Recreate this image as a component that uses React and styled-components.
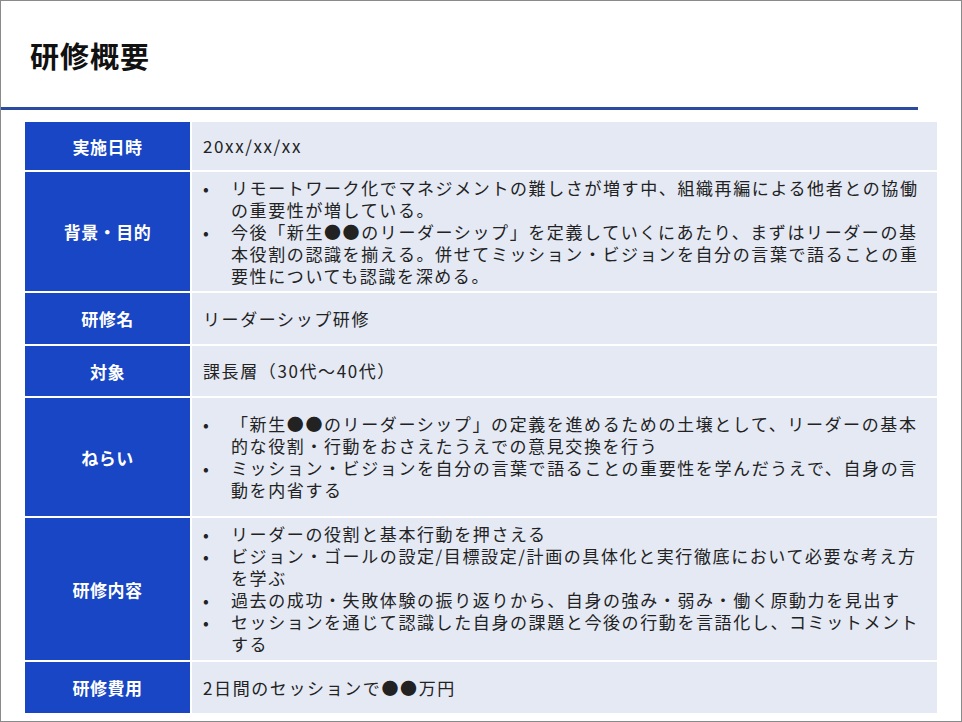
import React from "react";
import styled, { createGlobalStyle } from "styled-components";

const G = createGlobalStyle`
  html,body{margin:0;padding:0;background:#fff;}
  body{font-family:"Noto Sans CJK JP","Noto Sans",sans-serif;}
`;
const Page = styled.div`
  width:962px;height:722px;box-sizing:border-box;border:1px solid #8a8a8a;
  display:flex;flex-direction:column;overflow:hidden;
`;
const Title = styled.h1`
  margin:0;padding:34px 0 0 29px;height:72px;box-sizing:border-box;
  font-size:29px;font-weight:700;color:#111;letter-spacing:1px;line-height:40px;
`;
const Rule = styled.div`width:917px;height:3px;background:#2b4b9e;margin-top:34px;`;
const Table = styled.div`
  margin:12px 0 0 24px;width:912px;display:grid;grid-template-columns:165px 1fr;gap:2px;
`;
const Head = styled.div`
  background:#1846c4;color:#fff;font-weight:700;font-size:17px;
  display:flex;align-items:center;justify-content:center;height:${p=>p.h}px;letter-spacing:0.5px;
`;
const Cell = styled.div`
  background:#e4e9f4;color:#222;font-size:17px;letter-spacing:1.6px;line-height:22px;
  display:flex;flex-direction:column;justify-content:center;padding:0 14px 0 11px;height:${p=>p.h}px;
`;
const List = styled.ul`margin:0;padding:0;list-style:none;`;
const Item = styled.li`
  position:relative;padding-left:28px;
  &::before{content:"•";position:absolute;left:0;top:0;letter-spacing:0;}
`;

const rows = [
  ["実施日時", 48, "20xx/xx/xx"],
  ["背景・目的", 119, ["リモートワーク化でマネジメントの難しさが増す中、組織再編による他者との協働の重要性が増している。","今後「新生●●のリーダーシップ」を定義していくにあたり、まずはリーダーの基本役割の認識を揃える。併せてミッション・ビジョンを自分の言葉で語ることの重要性についても認識を深める。"]],
  ["研修名", 51, "リーダーシップ研修"],
  ["対象", 50, "課長層（30代～40代）"],
  ["ねらい", 118, ["「新生●●のリーダーシップ」の定義を進めるための土壌として、リーダーの基本的な役割・行動をおさえたうえでの意見交換を行う","ミッション・ビジョンを自分の言葉で語ることの重要性を学んだうえで、自身の言動を内省する"]],
  ["研修内容", 142, ["リーダーの役割と基本行動を押さえる","ビジョン・ゴールの設定/目標設定/計画の具体化と実行徹底において必要な考え方を学ぶ","過去の成功・失敗体験の振り返りから、自身の強み・弱み・働く原動力を見出す","セッションを通じて認識した自身の課題と今後の行動を言語化し、コミットメントする"]],
  ["研修費用", 51, "2日間のセッションで●●万円"],
];

export default function App(){
  return (<><G/><Page>
    <Title>研修概要</Title>
    <Rule/>
    <Table>
      {rows.map(([h,ht,c])=>(
        <React.Fragment key={h}>
          <Head h={ht}>{h}</Head>
          <Cell h={ht}>{Array.isArray(c)?<List>{c.map(t=><Item key={t}>{t}</Item>)}</List>:c}</Cell>
        </React.Fragment>
      ))}
    </Table>
  </Page></>);
}
